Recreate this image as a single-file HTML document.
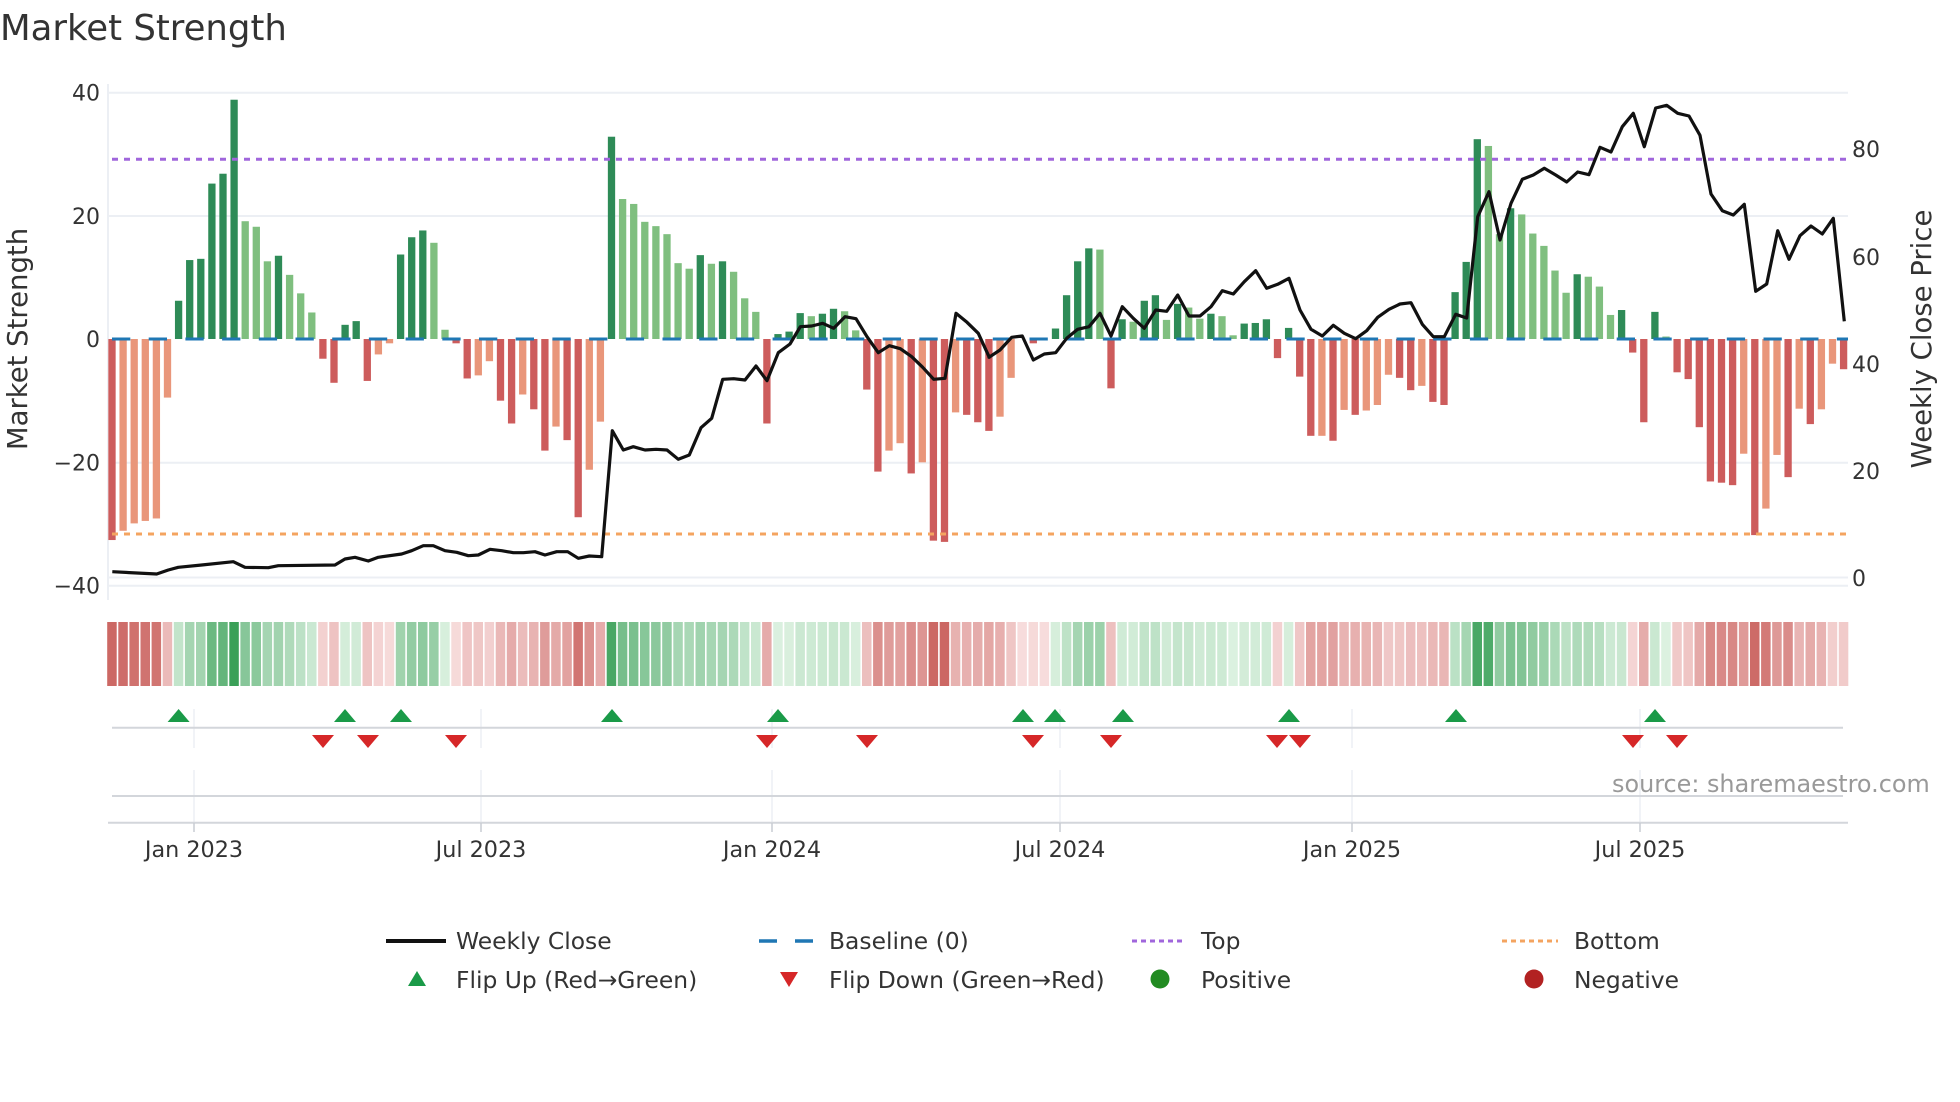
<!DOCTYPE html>
<html><head><meta charset="utf-8">
<style>
html,body{margin:0;padding:0;background:#fff;}
svg{display:block;font-family:"DejaVu Sans","Liberation Sans",sans-serif;}
</style></head>
<body>
<svg id="c" width="1960" height="1102" viewBox="0 0 1960 1102" xmlns="http://www.w3.org/2000/svg">
<rect width="1960" height="1102" fill="#fff"/>
<text x="0" y="40" font-size="35.5" fill="#333">Market Strength</text>
<g stroke="#eceff4" stroke-width="2">
<line x1="108" y1="92.7" x2="1848" y2="92.7"/>
<line x1="108" y1="216" x2="1848" y2="216"/>
<line x1="108" y1="462.7" x2="1848" y2="462.7"/>
<line x1="108" y1="577.5" x2="1848" y2="577.5"/>
<line x1="108" y1="585.7" x2="1848" y2="585.7"/>
<line x1="108" y1="84" x2="108" y2="600"/>
</g>
<g id="bars"></g>
<line x1="112" y1="339" x2="1848" y2="339" stroke="#1f77b4" stroke-width="3" stroke-dasharray="18.3 18.4"/>
<line x1="112" y1="159.3" x2="1848" y2="159.3" stroke="#a066dc" stroke-width="3" stroke-dasharray="6 6"/>
<line x1="112" y1="534" x2="1848" y2="534" stroke="#f4a460" stroke-width="3" stroke-dasharray="6 6"/>
<polyline id="price" fill="none" stroke="#111" stroke-width="3.2" stroke-linejoin="round" points=""/>
<g font-size="22" fill="#333" text-anchor="end">
<text x="100" y="100.7">40</text>
<text x="100" y="224">20</text>
<text x="100" y="347">0</text>
<text x="100" y="470.7">−20</text>
<text x="100" y="593.7">−40</text>
</g>
<g font-size="22" fill="#333">
<text x="1852" y="157">80</text>
<text x="1852" y="265">60</text>
<text x="1852" y="372">40</text>
<text x="1852" y="479">20</text>
<text x="1852" y="586">0</text>
</g>
<text transform="translate(27,339) rotate(-90)" font-size="27.5" fill="#333" text-anchor="middle">Market Strength</text>
<text transform="translate(1931,339) rotate(-90)" font-size="27.5" fill="#333" text-anchor="middle">Weekly Close Price</text>
<g id="heat"></g>
<g stroke="#eceff4" stroke-width="1.5">
<line x1="194" y1="709" x2="194" y2="748"/><line x1="481" y1="709" x2="481" y2="748"/><line x1="772" y1="709" x2="772" y2="748"/>
<line x1="1060" y1="709" x2="1060" y2="748"/><line x1="1352" y1="709" x2="1352" y2="748"/><line x1="1640" y1="709" x2="1640" y2="748"/>
<line x1="194" y1="770" x2="194" y2="823"/><line x1="481" y1="770" x2="481" y2="823"/><line x1="772" y1="770" x2="772" y2="823"/>
<line x1="1060" y1="770" x2="1060" y2="823"/><line x1="1352" y1="770" x2="1352" y2="823"/><line x1="1640" y1="770" x2="1640" y2="823"/>
</g>
<line x1="112" y1="727.7" x2="1843" y2="727.7" stroke="#d3d6db" stroke-width="2"/>
<line x1="112" y1="796" x2="1843" y2="796" stroke="#d3d6db" stroke-width="2"/>
<line x1="108" y1="822.7" x2="1848" y2="822.7" stroke="#d3d6db" stroke-width="2"/>
<g stroke="#c8ccd2" stroke-width="1.5">
<line x1="194" y1="823" x2="194" y2="832"/><line x1="481" y1="823" x2="481" y2="832"/><line x1="772" y1="823" x2="772" y2="832"/>
<line x1="1060" y1="823" x2="1060" y2="832"/><line x1="1352" y1="823" x2="1352" y2="832"/><line x1="1640" y1="823" x2="1640" y2="832"/>
</g>
<g id="marks"></g>
<g font-size="22.3" fill="#333" text-anchor="middle">
<text x="194" y="857">Jan 2023</text>
<text x="481" y="857">Jul 2023</text>
<text x="772" y="857">Jan 2024</text>
<text x="1060" y="857">Jul 2024</text>
<text x="1352" y="857">Jan 2025</text>
<text x="1640" y="857">Jul 2025</text>
</g>
<text x="1612" y="792" font-size="23.9" fill="#999">source: sharemaestro.com</text>
<g font-size="23.4" fill="#333">
<line x1="386" y1="941" x2="446" y2="941" stroke="#111" stroke-width="4"/>
<text x="456" y="949">Weekly Close</text>
<line x1="759" y1="941" x2="777" y2="941" stroke="#1f77b4" stroke-width="3.5"/>
<line x1="795" y1="941" x2="813" y2="941" stroke="#1f77b4" stroke-width="3.5"/>
<text x="829" y="949">Baseline (0)</text>
<line x1="1132" y1="941" x2="1186" y2="941" stroke="#a066dc" stroke-width="3" stroke-dasharray="5 4"/>
<text x="1201" y="949">Top</text>
<line x1="1502" y1="941" x2="1558" y2="941" stroke="#f4a460" stroke-width="3" stroke-dasharray="5 4"/>
<text x="1574" y="949">Bottom</text>
<polygon points="417,971 426,986 408,986" fill="#1a9a48"/>
<text x="456" y="988">Flip Up (Red→Green)</text>
<polygon points="780,972 798,972 789,987" fill="#d62728"/>
<text x="829" y="988">Flip Down (Green→Red)</text>
<circle cx="1160" cy="979" r="9.5" fill="#228b22"/>
<text x="1201" y="988">Positive</text>
<circle cx="1534" cy="979" r="9.5" fill="#b22222"/>
<text x="1574" y="988">Negative</text>
</g>
</svg>
<script>
(function(){
var NS="http://www.w3.org/2000/svg";
var v=[-32.6,-31.1,-29.9,-29.5,-29.1,-9.5,6.2,12.8,13.0,25.2,26.8,38.8,19.1,18.2,12.6,13.5,10.4,7.4,4.3,-3.2,-7.1,2.3,2.9,-6.8,-2.5,-0.7,13.7,16.5,17.6,15.6,1.5,-0.7,-6.4,-5.9,-3.6,-10,-13.7,-9,-11.4,-18.1,-14.2,-16.4,-28.9,-21.2,-13.4,32.8,22.7,21.9,19,18.3,17,12.3,11.4,13.6,12.2,12.6,10.9,6.6,4.4,-13.7,0.8,1.2,4.2,3.7,4.1,4.9,4.5,1.4,-8.2,-21.5,-18.1,-16.9,-21.8,-20,-32.7,-32.9,-11.9,-12.3,-13.5,-14.9,-12.6,-6.3,0,-0.7,0,1.7,7.1,12.6,14.7,14.5,-8,3.2,2.8,6.2,7.1,3.1,5.7,5.1,3.3,4.1,3.7,0.6,2.5,2.6,3.2,-3.1,1.8,-6.1,-15.7,-15.7,-16.5,-11.5,-12.3,-11.6,-10.7,-5.8,-6.3,-8.3,-7.6,-10.2,-10.7,7.6,12.5,32.4,31.3,17,21.2,20.2,17.1,15.1,11.1,7.5,10.5,10.1,8.5,3.9,4.7,-2.2,-13.5,4.4,0.4,-5.4,-6.5,-14.3,-23.1,-23.3,-23.7,-18.6,-31.8,-27.5,-18.8,-22.4,-11.3,-13.8,-11.4,-4,-4.9];
var t="RSSSSSDDDDDDLLLDLLLRRDDRSSDDDLLRRSSRRSRRSRRSSDLLLLLLLDLDLLLRDDDLDDLLRRSSRSRRSRRRSSSRSDDDDLRDLDDLDLLDLLDDDRDRRSRSRSSSRRSRRDDDLLDLLLLLDLLLDRRDLRRRRRRSRSSRSRSSR";
var col={D:"#2e8b57",L:"#7fbf7f",R:"#cd5c5c",S:"#e9967a"};
var bars=document.getElementById("bars"),heat=document.getElementById("heat");
function mix(a,b,k){var r=[];for(var j=0;j<3;j++)r.push(Math.round(a[j]+(b[j]-a[j])*k));return "rgb("+r.join(",")+")";}
for(var i=0;i<v.length;i++){
 var x=112+11.1*i,val=v[i],y0=339,h=Math.abs(val)*6.167;
 if(h>0.3){var r=document.createElementNS(NS,"rect");
 r.setAttribute("x",(x-3.65).toFixed(2));r.setAttribute("width","7.3");
 r.setAttribute("y",(val>0?y0-h:y0).toFixed(2));r.setAttribute("height",h.toFixed(2));
 r.setAttribute("fill",col[t[i]]||"#cd5c5c");bars.appendChild(r);}
 var k=Math.min(Math.abs(val)/36,1),c;
 if(val>=0.05||(val>-0.05&&t[i]!="R"&&t[i]!="S")) c=mix([222,242,226],[58,160,88],k);
 else c=mix([247,220,220],[200,92,88],k);
 var q=document.createElementNS(NS,"rect");
 q.setAttribute("x",(x-4.8).toFixed(2));q.setAttribute("width","9.5");
 q.setAttribute("y","622");q.setAttribute("height","64");q.setAttribute("fill",c);heat.appendChild(q);
}
var segs=[[105,[22,1475,155,1482,190,1470,220,1462,290,1455,385,1445,420,1462,490,1463,520,1457,690,1455,720,1437,750,1432,790,1443,820,1432,890,1422,920,1412,955,1397,985,1397,1020,1412,1055,1417,1090,1427,1120,1425,1155,1408,1190,1412,1225,1418,1255,1418,1290,1415,1320,1425,1355,1415]],
[545,[35,1415,68,1415,100,1435,133,1428,170,1430,202,1052,235,1110,265,1100,300,1110,333,1108,366,1110,400,1138,433,1125,468,1043,500,1015,533,898,566,896,600,900,633,858,666,902,700,818,735,792,766,740,800,738,833,730,866,745,900,710,933,716,966,770,1000,818,1033,797,1066,806,1100,830,1133,862,1166,898,1200,895,1233,700,1266,727,1300,760,1333,832]],
[985,[12,832,45,810,80,772,112,768,145,840,178,822,212,818,245,775,278,748,312,740,345,700,378,768,412,680,445,715,478,745,512,690,545,694,578,645,612,708,645,708,678,680,712,632,745,642,778,605,812,572,845,625,878,613,912,595,945,690,978,748,1012,768,1045,736,1078,760,1112,776,1145,752,1178,712,1212,688,1245,672,1278,668,1312,733,1345,770]],
[1425,[25,770,58,770,92,703,125,714,158,410,192,335,225,480,258,370,292,298,325,285,358,265,392,285,425,306,458,276,492,284,525,202,558,216,592,140,625,100,658,200,692,84,725,76,758,100,792,108,825,166,858,342,892,392,925,405,958,373,992,634,1025,612,1058,452,1092,538,1125,467,1158,438,1192,462,1225,415,1258,724]]];
var pts=[];
segs.forEach(function(s){var o=s[0],a=s[1];for(var j=0;j<a.length;j+=2){pts.push((o+a[j]/3).toFixed(1)+","+(80+a[j+1]/3).toFixed(1));}});
document.getElementById("price").setAttribute("points",pts.join(" "));
var m=document.getElementById("marks");
[178.6,345,401,612,778,1023,1055,1123,1289,1456,1655].forEach(function(x){var p=document.createElementNS(NS,"polygon");
p.setAttribute("points",x+",709 "+(x+11)+",722 "+(x-11)+",722");p.setAttribute("fill","#1a9a48");m.appendChild(p);});
[323,368,456,767,867,1033,1111,1277,1300,1633,1677].forEach(function(x){var p=document.createElementNS(NS,"polygon");
p.setAttribute("points",(x-11)+",735 "+(x+11)+",735 "+x+",748");p.setAttribute("fill","#d62728");m.appendChild(p);});
})();
</script>
</body></html>
